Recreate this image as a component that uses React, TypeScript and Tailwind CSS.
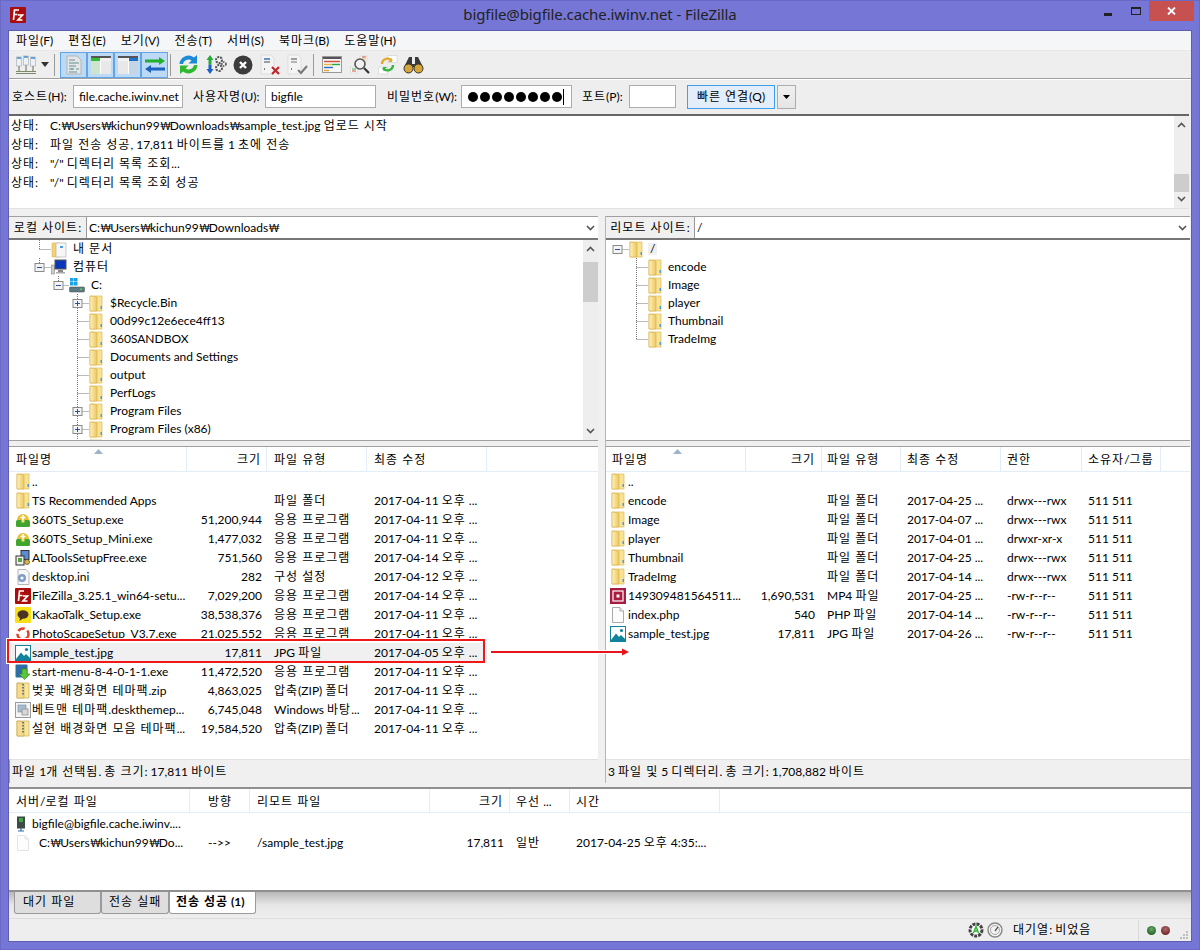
import React from 'react';

// Hangul runs get extra tracking so their advance matches the original UI font, the won sign is narrowed for the same reason
const ko = (s: string): React.ReactNode => (
  <span>
    {s.split(/([\uAC00-\uD7A3]+(?: [\uAC00-\uD7A3]+)*|₩)/).map((part, i) => {
      if (i % 2 === 0) return part;
      if (part === '₩') return <span key={i} className="text-[11px] tracking-[-1.5px]">{part}</span>;
      return <span key={i} className="tracking-[1px]">{part}</span>;
    })}
  </span>
);

const Folder = () => (
  <svg width="14" height="17" viewBox="0 0 14 17" className="shrink-0">
    <defs>
      <linearGradient id="flap" x1="0" y1="0" x2="1" y2="0">
        <stop offset="0" stopColor="#fdf2c0" />
        <stop offset="1" stopColor="#eec65a" />
      </linearGradient>
    </defs>
    <path d="M1 1 H13 V16 H1 Z" fill="#f7e296" stroke="#dcbb5c" strokeWidth="0.7" />
    <path d="M1 1 L8 2 V16 H1 Z" fill="url(#flap)" stroke="#d9b654" strokeWidth="0.7" />
    <rect x="11.5" y="11" width="1.5" height="3" fill="#4a9be0" />
  </svg>
);

const ImgIcon = () => (
  <svg width="16" height="16" viewBox="0 0 16 16" className="shrink-0">
    <rect x="0.5" y="0.5" width="15" height="15" fill="#fff" stroke="#11819c" />
    <path d="M1 14 L6 7.5 L9 11 L11 9 L15 13 V15 H1 Z" fill="#11819c" />
    <circle cx="11.5" cy="4.5" r="1.6" fill="#11819c" />
  </svg>
);

const Setup360 = () => (
  <svg width="16" height="16" viewBox="0 0 16 16" className="shrink-0">
    <path d="M2 8 A6 6 0 0 1 14 8 Z" fill="#e9c12f" />
    <rect x="1" y="8" width="14" height="7" rx="1.5" fill="#3fa52e" />
    <path d="M8 3 V8 M5.5 5.5 H10.5" stroke="#fff" strokeWidth="1.6" />
    <rect x="6.5" y="8" width="3" height="2.5" fill="#f5e07a" />
  </svg>
);

const AlTools = () => (
  <svg width="16" height="16" viewBox="0 0 16 16" className="shrink-0">
    <rect x="6" y="0.5" width="8" height="9" fill="#5b8bd0" stroke="#333" />
    <rect x="1" y="6" width="8" height="9" fill="#eee" stroke="#333" />
    <rect x="3" y="8" width="4" height="4" fill="#58a53c" />
    <circle cx="12" cy="12" r="2.5" fill="#e2b93b" stroke="#333" strokeWidth="0.6" />
  </svg>
);

const IniIcon = () => (
  <svg width="16" height="16" viewBox="0 0 16 16" className="shrink-0">
    <path d="M3 0.5 H11 L14 3.5 V15.5 H3 Z" fill="#f7f7f7" stroke="#b5b5b5" />
    <circle cx="7" cy="9" r="4" fill="#7f9cc4" />
    <circle cx="7" cy="9" r="1.6" fill="#fff" />
  </svg>
);

const FzIcon = ({ size = 16 }: { size?: number }) => (
  <svg width={size} height={size} viewBox="0 0 16 16" className="shrink-0">
    <rect width="16" height="16" rx="1" fill="#a90d0d" />
    <path d="M3.5 13 L4.5 3 H9 M4 7.5 H7.5 M8 8 H12.5 L8 13 H12.5" fill="none" stroke="#fff" strokeWidth="1.7" />
  </svg>
);

const Kakao = () => (
  <svg width="16" height="16" viewBox="0 0 16 16" className="shrink-0">
    <rect width="16" height="16" rx="1" fill="#f7e017" />
    <ellipse cx="8" cy="7.5" rx="5.5" ry="4.2" fill="#4b3322" />
    <path d="M5 10.5 L4.5 14 L8 11.5 Z" fill="#4b3322" />
  </svg>
);

const PhotoScape = () => (
  <svg width="16" height="16" viewBox="0 0 16 16" className="shrink-0">
    <circle cx="8" cy="8" r="5.5" fill="none" stroke="#d9472b" strokeWidth="2.5" strokeDasharray="7 3" />
  </svg>
);

const StartMenu = () => (
  <svg width="16" height="16" viewBox="0 0 16 16" className="shrink-0">
    <rect x="0.5" y="0.5" width="12" height="13" rx="1" fill="#2f6ea5" />
    <path d="M7 5 H12 V10 H15 L9.5 15.5 L4 10 H7 Z" fill="#5cc63a" stroke="#2e8a1a" strokeWidth="0.6" />
  </svg>
);

const ZipIcon = () => (
  <svg width="14" height="17" viewBox="0 0 14 17" className="shrink-0">
    <path d="M1 1 H13 V16 H1 Z" fill="#f8e6a0" stroke="#c9a94f" strokeWidth="0.7" />
    <path d="M1 1 L8 2 V16 H1 Z" fill="#f5dc8c" stroke="#c9a94f" strokeWidth="0.7" />
    <path d="M7 2 V13" stroke="#777" strokeWidth="2" strokeDasharray="1.5 1.5" />
  </svg>
);

const ThemeIcon = () => (
  <svg width="16" height="16" viewBox="0 0 16 16" className="shrink-0">
    <rect x="0.5" y="0.5" width="15" height="15" fill="#f4f4f4" stroke="#9a9a9a" />
    <rect x="3" y="3" width="8" height="7" fill="#a9bdd2" stroke="#7b8a99" strokeWidth="0.6" />
    <rect x="7" y="7" width="6" height="6" fill="#d7d7d7" stroke="#777" strokeWidth="0.6" />
  </svg>
);

const Mp4Icon = () => (
  <svg width="16" height="16" viewBox="0 0 16 16" className="shrink-0">
    <rect width="16" height="16" fill="#a81c3f" />
    <rect x="3" y="3" width="10" height="10" fill="none" stroke="#fff" strokeWidth="1.2" />
    <rect x="6.5" y="6.5" width="3" height="3" fill="#fff" />
  </svg>
);

const PageIcon = ({ stroke = '#aaa' }: { stroke?: string }) => (
  <svg width="14" height="16" viewBox="0 0 14 16" className="shrink-0">
    <path d="M1.5 0.5 H9 L12.5 4 V15.5 H1.5 Z" fill="#fdfdfd" stroke={stroke} />
    <path d="M9 0.5 V4 H12.5" fill="#eee" stroke={stroke} />
  </svg>
);

const fileIcons: Record<string, React.ReactNode> = {
  folder: <Folder />,
  img: <ImgIcon />,
  setup: <Setup360 />,
  al: <AlTools />,
  ini: <IniIcon />,
  fz: <FzIcon />,
  kakao: <Kakao />,
  ps: <PhotoScape />,
  start: <StartMenu />,
  zip: <ZipIcon />,
  theme: <ThemeIcon />,
  mp4: <Mp4Icon />,
  page: <PageIcon />,
};

const localFiles = [
  ['folder', '..', '', '', ''],
  ['folder', 'TS Recommended Apps', '', '파일 폴더', '2017-04-11 오후 ...'],
  ['setup', '360TS_Setup.exe', '51,200,944', '응용 프로그램', '2017-04-11 오후 ...'],
  ['setup', '360TS_Setup_Mini.exe', '1,477,032', '응용 프로그램', '2017-04-11 오후 ...'],
  ['al', 'ALToolsSetupFree.exe', '751,560', '응용 프로그램', '2017-04-14 오후 ...'],
  ['ini', 'desktop.ini', '282', '구성 설정', '2017-04-12 오후 ...'],
  ['fz', 'FileZilla_3.25.1_win64-setu...', '7,029,200', '응용 프로그램', '2017-04-14 오후 ...'],
  ['kakao', 'KakaoTalk_Setup.exe', '38,538,376', '응용 프로그램', '2017-04-11 오후 ...'],
  ['ps', 'PhotoScapeSetup_V3.7.exe', '21,025,552', '응용 프로그램', '2017-04-11 오후 ...'],
  ['img', 'sample_test.jpg', '17,811', 'JPG 파일', '2017-04-05 오후 ...'],
  ['start', 'start-menu-8-4-0-1-1.exe', '11,472,520', '응용 프로그램', '2017-04-11 오후 ...'],
  ['zip', '벚꽃 배경화면 테마팩.zip', '4,863,025', '압축(ZIP) 폴더', '2017-04-11 오후 ...'],
  ['theme', '베트맨 테마팩.deskthemep...', '6,745,048', 'Windows 바탕...', '2017-04-11 오후 ...'],
  ['zip', '설현 배경화면 모음 테마팩...', '19,584,520', '압축(ZIP) 폴더', '2017-04-11 오후 ...'],
];

const remoteFiles = [
  ['folder', '..', '', '', '', '', ''],
  ['folder', 'encode', '', '파일 폴더', '2017-04-25 ...', 'drwx---rwx', '511 511'],
  ['folder', 'Image', '', '파일 폴더', '2017-04-07 ...', 'drwx---rwx', '511 511'],
  ['folder', 'player', '', '파일 폴더', '2017-04-01 ...', 'drwxr-xr-x', '511 511'],
  ['folder', 'Thumbnail', '', '파일 폴더', '2017-04-25 ...', 'drwx---rwx', '511 511'],
  ['folder', 'TradeImg', '', '파일 폴더', '2017-04-14 ...', 'drwx---rwx', '511 511'],
  ['mp4', '149309481564511...', '1,690,531', 'MP4 파일', '2017-04-25 ...', '-rw-r--r--', '511 511'],
  ['page', 'index.php', '540', 'PHP 파일', '2017-04-14 ...', '-rw-r--r--', '511 511'],
  ['img', 'sample_test.jpg', '17,811', 'JPG 파일', '2017-04-26 ...', '-rw-r--r--', '511 511'],
];

const Chevron = ({ down = true, className = '' }: { down?: boolean; className?: string }) => (
  <svg width="9" height="6" viewBox="0 0 9 6" className={className}>
    <path d={down ? 'M1 1 L4.5 4.5 L8 1' : 'M1 5 L4.5 1.5 L8 5'} fill="none" stroke="#555" strokeWidth="1.6" />
  </svg>
);

const Scrollbar = ({ thumbClass }: { thumbClass: string }) => (
  <div className="w-[15px] shrink-0 bg-[#eeeeee] flex flex-col items-center justify-between py-[6px] relative">
    <Chevron down={false} />
    <div className={`absolute left-0 w-[15px] bg-[#cdcdcd] ${thumbClass}`} />
    <Chevron />
  </div>
);

// lead = connector area in front of a tree icon
const TreeLead = ({ width, vx, top, bottom, hTo, box, boxX, plus }: { width: number; vx?: number; top?: number; bottom?: number; hTo?: number; box?: boolean; boxX?: number; plus?: boolean }) => {
  const bx = boxX ?? vx ?? 0;
  return (
    <svg width={width} height="18" className="shrink-0">
      {vx !== undefined && <line x1={vx + 0.5} y1={top ?? 0} x2={vx + 0.5} y2={bottom ?? 18} stroke="#777" strokeDasharray="1 1" />}
      {hTo !== undefined && <line x1={bx + 0.5} y1="9.5" x2={hTo} y2="9.5" stroke="#777" strokeDasharray="1 1" />}
      {box && (
        <g>
          <rect x={bx - 4} y="5.5" width="9" height="8" fill="#f4f4f4" stroke="#8a8a8a" />
          <line x1={bx - 2} y1="9.5" x2={bx + 3} y2="9.5" stroke="#2d4f9c" />
          {plus && <line x1={bx + 0.5} y1="7" x2={bx + 0.5} y2="12" stroke="#2d4f9c" />}
        </g>
      )}
    </svg>
  );
};

const LocalTree = () => {
  const folders: [string, boolean][] = [
    ['$Recycle.Bin', true],
    ['00d99c12e6ece4ff13', false],
    ['360SANDBOX', false],
    ['Documents and Settings', false],
    ['output', false],
    ['PerfLogs', false],
    ['Program Files', true],
    ['Program Files (x86)', true],
  ];
  return (
    <div className="flex-1 min-w-0 overflow-hidden">
      <div className="flex items-center h-[18px]">
        <TreeLead width={42} vx={30} bottom={9} hTo={42} />
        <svg width="16" height="17" viewBox="0 0 16 17" className="shrink-0">
          <path d="M1 2 H9 V16 H1 Z" fill="#f2d272" stroke="#dcb95c" strokeWidth="0.6" />
          <rect x="5" y="2" width="10" height="14" fill="#f6f6f6" stroke="#aaa" strokeWidth="0.6" />
          <rect x="9" y="5" width="3" height="2" fill="#4a9be0" />
        </svg>
        <span className="ml-[6px]">{ko('내 문서')}</span>
      </div>
      <div className="flex items-center h-[18px]">
        <TreeLead width={42} vx={30} bottom={9} hTo={42} box />
        <svg width="16" height="16" viewBox="0 0 16 16" className="shrink-0">
          <rect x="0.5" y="6" width="3" height="9" fill="#ccc" stroke="#777" strokeWidth="0.5" />
          <rect x="4" y="1" width="11" height="9" fill="#0a36b8" stroke="#555" />
          <rect x="7" y="11" width="5" height="2" fill="#888" />
          <rect x="5" y="13" width="9" height="1.5" fill="#aaa" />
        </svg>
        <span className="ml-[6px]">{ko('컴퓨터')}</span>
      </div>
      <div className="flex items-center h-[18px]">
        <TreeLead width={60} vx={49} bottom={9} hTo={60} box />
        <svg width="16" height="16" viewBox="0 0 16 16" className="shrink-0">
          <rect x="1" y="1" width="3.5" height="3.5" fill="#14a3e8" />
          <rect x="5" y="1" width="3.5" height="3.5" fill="#14a3e8" />
          <rect x="1" y="5" width="3.5" height="3.5" fill="#14a3e8" />
          <rect x="5" y="5" width="3.5" height="3.5" fill="#14a3e8" />
          <rect x="0.5" y="10" width="15" height="5" rx="1" fill="#5c7a83" stroke="#444" strokeWidth="0.5" />
          <rect x="11" y="11.5" width="2" height="1.5" fill="#5ccf4e" />
        </svg>
        <span className="ml-[6px]">C:</span>
      </div>
      {folders.map(([name, plus]) => (
        <div key={name} className="flex items-center h-[18px]">
          <TreeLead width={80} vx={68} hTo={80} box={plus} plus={plus} />
          <Folder />
          <span className="ml-[7px]">{name}</span>
        </div>
      ))}
      <div className="flex items-center h-[18px]">
        <TreeLead width={80} vx={68} hTo={80} />
        <Folder />
      </div>
    </div>
  );
};

const RemoteTree = () => (
  <div className="flex-1 min-w-0 overflow-hidden">
    <div className="flex items-center h-[18px]">
      <TreeLead width={23} boxX={11} hTo={23} box />
      <Folder />
      <span className="ml-[5px] px-[2px] bg-[#f0f0f0]">/</span>
    </div>
    {['encode', 'Image', 'player', 'Thumbnail', 'TradeImg'].map((name, i) => (
      <div key={name} className="flex items-center h-[18px]">
        <TreeLead width={42} vx={30} bottom={i === 4 ? 9 : 18} hTo={42} />
        <Folder />
        <span className="ml-[6px]">{name}</span>
      </div>
    ))}
  </div>
);

const SiteBar = ({ label, path, labelClass }: { label: string; path: string; labelClass: string }) => (
  <div className="h-[24px] flex items-stretch border-t border-[#a0a0a0] border-b-2 border-b-[#777] bg-white shrink-0">
    <div className={`bg-[#f0f0f0] flex items-center justify-center pt-[1px] border-r border-[#999] ${labelClass}`}>{ko(label)}</div>
    <div className="flex-1 flex items-center pl-[2px] pr-[3px] justify-between pt-[1px]">
      {ko(path)}
      <Chevron />
    </div>
  </div>
);

const HeaderCell = ({ className = '', children }: { className?: string; children?: React.ReactNode }) => (
  <div className={`h-full flex items-center pt-[2px] border-r border-[#e3edf8] ${className}`}>{children}</div>
);

const LocalList = () => (
  <div className="flex-1 flex flex-col min-h-0 border-t border-[#a0a0a0] bg-white relative">
    <div className="h-[25px] flex shrink-0 border-b border-[#e3edf8]">
      <HeaderCell className="w-[178px] pl-[7px] relative">
        {ko('파일명')}
        <svg width="9" height="5" className="absolute left-[85px] top-[2px]"><path d="M0 5 L4.5 0 L9 5 Z" fill="#9cb4c8" /></svg>
      </HeaderCell>
      <HeaderCell className="w-[80px] justify-end pr-[5px]">{ko('크기')}</HeaderCell>
      <HeaderCell className="w-[100px] pl-[7px]">{ko('파일 유형')}</HeaderCell>
      <HeaderCell className="w-[120px] pl-[7px]">{ko('최종 수정')}</HeaderCell>
    </div>
    <div className="flex-1 min-h-0 overflow-hidden">
      {localFiles.map(([icon, name, size, type, date]) => (
        <div key={name} className={`h-[19px] flex items-center w-[478px] ${name === 'sample_test.jpg' ? 'bg-[#f0f0f0]' : ''}`}>
          <div className="w-[178px] flex items-center pl-[6px] gap-[1px] shrink-0 overflow-hidden">
            <div className="w-[16px] flex justify-center shrink-0">{fileIcons[icon]}</div>
            <span className="whitespace-nowrap">{ko(name)}</span>
          </div>
          <div className="w-[75px] text-right shrink-0">{size}</div>
          <div className="w-[112px] pl-[12px] shrink-0 whitespace-nowrap">{ko(type)}</div>
          <div className="whitespace-nowrap">{ko(date)}</div>
        </div>
      ))}
    </div>
    <div className="h-[24px] shrink-0 flex items-center pl-[2px] bg-[#f0f0f0] border-l border-[#a0a0a0] border-t border-t-[#e2e2e2]">{ko('파일 1개 선택됨. 총 크기: 17,811 바이트')}</div>
  </div>
);

const RemoteList = () => (
  <div className="flex-1 flex flex-col min-h-0 border-t border-[#a0a0a0] bg-white">
    <div className="h-[25px] flex shrink-0 border-b border-[#e3edf8]">
      <HeaderCell className="w-[140px] pl-[6px] relative">
        {ko('파일명')}
        <svg width="9" height="5" className="absolute left-[67px] top-[2px]"><path d="M0 5 L4.5 0 L9 5 Z" fill="#9cb4c8" /></svg>
      </HeaderCell>
      <HeaderCell className="w-[76px] justify-end pr-[6px]">{ko('크기')}</HeaderCell>
      <HeaderCell className="w-[79px] pl-[5px]">{ko('파일 유형')}</HeaderCell>
      <HeaderCell className="w-[100px] pl-[6px]">{ko('최종 수정')}</HeaderCell>
      <HeaderCell className="w-[81px] pl-[6px]">{ko('권한')}</HeaderCell>
      <HeaderCell className="w-[79px] pl-[6px]">{ko('소유자/그룹')}</HeaderCell>
    </div>
    <div className="flex-1 min-h-0 overflow-hidden">
      {remoteFiles.map(([icon, name, size, type, date, perm, owner]) => (
        <div key={name} className="h-[19px] flex items-center">
          <div className="w-[139px] flex items-center pl-[4px] gap-[2px] shrink-0 overflow-hidden">
            <div className="w-[16px] flex justify-center shrink-0">{fileIcons[icon]}</div>
            <span className="whitespace-nowrap">{name}</span>
          </div>
          <div className="w-[70px] text-right shrink-0">{size}</div>
          <div className="w-[85px] pl-[12px] shrink-0 whitespace-nowrap">{ko(type)}</div>
          <div className="w-[100px] pl-[7px] shrink-0 whitespace-nowrap">{date}</div>
          <div className="w-[81px] pl-[7px] shrink-0 whitespace-nowrap">{perm}</div>
          <div className="pl-[7px] whitespace-nowrap">{owner}</div>
        </div>
      ))}
    </div>
    <div className="h-[24px] shrink-0 flex items-center pl-[2px] bg-[#f0f0f0] border-t border-t-[#e2e2e2]">{ko('3 파일 및 5 디렉터리. 총 크기: 1,708,882 바이트')}</div>
  </div>
);

const ToolBtn = ({ children, className = '' }: { children: React.ReactNode; className?: string }) => (
  <div className={`h-[26px] flex items-center justify-center shrink-0 ${className}`}>{children}</div>
);

const Sep = () => <div className="w-px h-[22px] bg-[#9a9a9a] shrink-0" />;

const Toggle = ({ children }: { children: React.ReactNode }) => (
  <div className="w-[27px] h-[26px] flex items-center justify-center bg-[#bcd9f5] border border-[#62a5e6] shrink-0">{children}</div>
);

const Toolbar = () => (
  <div className="h-[28px] flex items-center pl-[5px] bg-[#eeeeee] border-t border-[#e8e8e8] shrink-0">
    <ToolBtn className="w-[24px]">
      <svg width="22" height="20" viewBox="0 0 22 20">
        <g fill="#eef1f4" stroke="#a8b2bc" strokeWidth="0.7">
          <rect x="1.5" y="2" width="5" height="9" />
          <rect x="8.5" y="1" width="5" height="9" />
          <rect x="15.5" y="2" width="5" height="9" />
        </g>
        <path d="M2 3 H6 M9 2 H13 M16 3 H20" stroke="#3b8fd4" strokeWidth="1.4" />
        <path d="M4 11 V16 M11 10 V16 M18 11 V16" stroke="#6b6b5a" strokeWidth="1" />
        <path d="M1 16.5 H21 M1 18.5 H21" stroke="#7d8a68" strokeWidth="1" />
      </svg>
    </ToolBtn>
    <ToolBtn className="w-[12px] ml-[1px]">
      <svg width="8" height="5"><path d="M0 0 H8 L4 5 Z" fill="#333" /></svg>
    </ToolBtn>
    <div className="w-[3px]" />
    <Sep />
    <div className="w-[5px]" />
    <Toggle>
      <svg width="16" height="20" viewBox="0 0 16 20">
        <path d="M1 1 H11 L15 5 V19 H1 Z" fill="#e4e7e4" stroke="#b0b6b6" />
        <path d="M3 5 H9 M3 8 H7 M9 8 H13 M3 11 H10 M3 14 H8 M10 14 H13 M3 17 H11" stroke="#6d8ca8" strokeWidth="1.2" />
        <path d="M7 8 H9 M5 14 H7" stroke="#4aa84a" strokeWidth="1.2" />
      </svg>
    </Toggle>
    <Toggle>
      <svg width="20" height="18" viewBox="0 0 20 18">
        <rect width="20" height="18" fill="#e8e8e8" />
        <rect width="20" height="2" fill="#555" />
        <rect y="2" width="9" height="3" fill="#2fc02f" />
        <rect x="9" y="2" width="11" height="3" fill="#f2f2f2" />
        <rect y="5" width="9" height="13" fill="#cde4cd" />
        <rect x="9" y="2" width="1" height="16" fill="#fff" />
      </svg>
    </Toggle>
    <Toggle>
      <svg width="20" height="18" viewBox="0 0 20 18">
        <rect width="20" height="18" fill="#e8e8e8" />
        <rect width="20" height="2" fill="#555" />
        <rect x="11" y="2" width="9" height="3" fill="#1b72c8" />
        <rect x="0" y="2" width="11" height="3" fill="#f2f2f2" />
        <rect x="11" y="5" width="9" height="13" fill="#c4d6e6" />
        <rect x="10" y="2" width="1" height="16" fill="#fff" />
      </svg>
    </Toggle>
    <Toggle>
      <svg width="20" height="18" viewBox="0 0 20 18">
        <path d="M0 3.5 H14 V1 L20 5 L14 9 V6.5 H0 Z" fill="#21b02c" />
        <path d="M20 11.5 H6 V9 L0 13 L6 17 V14.5 H20 Z" fill="#1b62c0" />
      </svg>
    </Toggle>
    <div className="w-[2px]" />
    <Sep />
    <ToolBtn className="w-[23px] ml-[6px]">
      <svg width="21" height="21" viewBox="0 0 21 21">
        <path d="M1.5 10 A9 9 0 0 1 16 3.5 L19 1 V9.5 H10.5 L13.5 6.5 A5.5 5.5 0 0 0 5 10 Z" fill="#1b8ad8" />
        <path d="M19.5 11 A9 9 0 0 1 5 17.5 L2 20 V11.5 H10.5 L7.5 14.5 A5.5 5.5 0 0 0 16 11 Z" fill="#2eb82e" />
      </svg>
    </ToolBtn>
    <ToolBtn className="w-[22px] ml-[5px]">
      <svg width="21" height="21" viewBox="0 0 21 21">
        <path d="M4 1 L7.5 6 H5.5 V10.5 H2.5 V6 H0.5 Z" fill="#25a93a" />
        <path d="M4 20 L7.5 15 H5.5 V10.5 H2.5 V15 H0.5 Z" fill="#1b62c0" />
        <circle cx="13" cy="6" r="3" fill="none" stroke="#555" strokeWidth="2" strokeDasharray="2 1" />
        <circle cx="13" cy="14" r="3" fill="none" stroke="#555" strokeWidth="2" strokeDasharray="2 1" />
        <circle cx="18" cy="10" r="2" fill="none" stroke="#555" strokeWidth="1.6" strokeDasharray="1.5 1" />
      </svg>
    </ToolBtn>
    <ToolBtn className="w-[20px] ml-[6px]">
      <svg width="20" height="20" viewBox="0 0 20 20">
        <circle cx="10" cy="10" r="9.5" fill="#3c3c3c" />
        <path d="M7 7 L13 13 M13 7 L7 13" stroke="#fff" strokeWidth="2.4" />
      </svg>
    </ToolBtn>
    <ToolBtn className="w-[21px] ml-[7px]">
      <svg width="21" height="21" viewBox="0 0 21 21">
        <path d="M1 1 H11 L14 4 V20 H1 Z" fill="#f4f4f4" stroke="#ddd" />
        <path d="M4 5 H10" stroke="#2a6cc0" strokeWidth="1.4" />
        <path d="M4 8 H10" stroke="#777" strokeWidth="1.4" />
        <path d="M4 15 H5" stroke="#555" strokeWidth="1.4" />
        <path d="M12 13 L19 20 M19 13 L12 20" stroke="#c0272d" strokeWidth="2.2" />
      </svg>
    </ToolBtn>
    <ToolBtn className="w-[21px] ml-[6px]">
      <svg width="21" height="21" viewBox="0 0 21 21">
        <path d="M1 1 H11 L14 4 V20 H1 Z" fill="#f4f4f4" stroke="#ddd" />
        <path d="M4 5 H10" stroke="#777" strokeWidth="1.4" />
        <path d="M4 8 H10" stroke="#999" strokeWidth="1.4" />
        <path d="M4 15 H5" stroke="#555" strokeWidth="1.4" />
        <path d="M11 16 L14 19 L20 12" fill="none" stroke="#777" strokeWidth="2" />
      </svg>
    </ToolBtn>
    <div className="w-[5px]" />
    <Sep />
    <ToolBtn className="w-[20px] ml-[8px]">
      <svg width="20" height="17" viewBox="0 0 20 17">
        <rect x="0.5" y="0.5" width="19" height="16" fill="#f6f6f6" stroke="#999" />
        <rect x="1" y="1" width="18" height="2" fill="#555" />
        <path d="M2 5.5 H18" stroke="#d94a3a" strokeWidth="1.4" />
        <path d="M2 8.5 H10" stroke="#e2b93b" strokeWidth="1.4" />
        <path d="M10 8.5 H18" stroke="#2aa84a" strokeWidth="1.4" />
        <path d="M2 11.5 H11" stroke="#2a6cc0" strokeWidth="1.4" />
        <path d="M2 14.5 H7" stroke="#e2a63b" strokeWidth="1.4" />
      </svg>
    </ToolBtn>
    <ToolBtn className="w-[20px] ml-[8px]">
      <svg width="20" height="20" viewBox="0 0 20 20">
        <rect x="10" y="1" width="7" height="5" fill="#fff" stroke="#ddd" />
        <path d="M12 2 H16" stroke="#d94a3a" />
        <path d="M12 4 H16" stroke="#e2b93b" />
        <rect x="0.5" y="12" width="7" height="6" fill="#fff" stroke="#ddd" />
        <path d="M2 14 H6" stroke="#2aa84a" />
        <path d="M2 16 H6" stroke="#d94a3a" />
        <circle cx="10" cy="9" r="5" fill="#f2f2f2" fillOpacity="0.7" stroke="#555" strokeWidth="1.6" />
        <path d="M14 13 L19 18" stroke="#333" strokeWidth="2.2" />
      </svg>
    </ToolBtn>
    <ToolBtn className="w-[20px] ml-[8px]">
      <svg width="20" height="20" viewBox="0 0 20 20">
        <rect x="10" y="0.5" width="9" height="7" fill="#fff" stroke="#ddd" />
        <rect x="0.5" y="12" width="9" height="7" fill="#fff" stroke="#ddd" />
        <path d="M4 9 A5.5 5.5 0 0 1 14 6" fill="none" stroke="#e2a92e" strokeWidth="2.4" />
        <path d="M15 10 A5.5 5.5 0 0 1 5 13" fill="none" stroke="#35b53f" strokeWidth="2.4" />
        <path d="M14 3 V7 H10 Z" fill="#e2a92e" />
        <path d="M5 16 V12 H9 Z" fill="#35b53f" />
      </svg>
    </ToolBtn>
    <ToolBtn className="w-[22px] ml-[4px]">
      <svg width="21" height="18" viewBox="0 0 21 18">
        <path d="M6 1 H9 V8 H12 V1 H15 L20 11 H1 Z" fill="#3a3a3a" />
        <circle cx="5.5" cy="12.5" r="4.5" fill="#d5a53a" stroke="#333" />
        <circle cx="15.5" cy="12.5" r="4.5" fill="#d5a53a" stroke="#333" />
      </svg>
    </ToolBtn>
  </div>
);

const Field = ({ className, children }: { className: string; children?: React.ReactNode }) => (
  <div className={`h-[23px] bg-white border border-[#acacac] flex items-center overflow-hidden whitespace-nowrap shrink-0 ${className}`}>{children}</div>
);

const QuickBar = () => (
  <div className="h-[36px] flex items-center pl-[3px] bg-[#eeeeee] border-t border-[#a0a0a0] shadow-[inset_0_1px_0_#fff] shrink-0">
    <span className="w-[61px] shrink-0 whitespace-nowrap">{ko('호스트(H):')}</span>
    <Field className="w-[110px] pl-[5px]">file.cache.iwinv.net</Field>
    <span className="ml-[10px] w-[72px] shrink-0 whitespace-nowrap">{ko('사용자명(U):')}</span>
    <Field className="w-[111px] pl-[5px]">bigfile</Field>
    <span className="ml-[11px] w-[74px] shrink-0 whitespace-nowrap">{ko('비밀번호(W):')}</span>
    <Field className="w-[111px] pl-[6px]">
      <span className="flex gap-[2px]">
        {Array.from({ length: 8 }).map((_, i) => (
          <span key={i} className="w-[10px] h-[10px] rounded-full bg-black" />
        ))}
      </span>
      <span className="w-px h-[16px] bg-black ml-[1px]" />
    </Field>
    <span className="ml-[10px] w-[47px] shrink-0 whitespace-nowrap">{ko('포트(P):')}</span>
    <Field className="w-[47px]" />
    <div className="ml-[11px] w-[88px] h-[24px] flex items-center justify-center bg-[#e3eefa] border border-[#3c9ff0] shrink-0">{ko('빠른 연결(Q)')}</div>
    <div className="ml-[2px] w-[19px] h-[24px] flex items-center justify-center bg-gradient-to-b from-[#f0f0f0] to-[#e5e5e5] border border-[#acacac] shrink-0">
      <svg width="7" height="4"><path d="M0 0 H7 L3.5 4 Z" fill="#000" /></svg>
    </div>
  </div>
);

const logLines = [
  'C:₩Users₩kichun99₩Downloads₩sample_test.jpg 업로드 시작',
  '파일 전송 성공, 17,811 바이트를 1 초에 전송',
  '"/" 디렉터리 목록 조회...',
  '"/" 디렉터리 목록 조회 성공',
];

const MessageLog = () => (
  <div className="h-[95px] flex mr-[2px] bg-white border-t-2 border-[#666] border-b border-b-[#e2e2e2] shrink-0">
    <div className="flex-1 pl-[2px]">
      {logLines.map(line => (
        <div key={line} className="h-[19px] flex items-center">
          <span className="w-[39px] shrink-0">{ko('상태:')}</span>
          {ko(line)}
        </div>
      ))}
    </div>
    <Scrollbar thumbClass="top-[58px] h-[18px]" />
  </div>
);

const Queue = () => (
  <div className="h-[105px] bg-white border-t-2 border-[#909090] border-b-2 border-b-[#909090] shrink-0">
    <div className="h-[24px] flex border-b border-[#e3edf8]">
      <HeaderCell className="w-[181px] pl-[7px]">{ko('서버/로컬 파일')}</HeaderCell>
      <HeaderCell className="w-[60px] pl-[18px]">{ko('방향')}</HeaderCell>
      <HeaderCell className="w-[180px] pl-[7px]">{ko('리모트 파일')}</HeaderCell>
      <HeaderCell className="w-[80px] justify-end pr-[6px]">{ko('크기')}</HeaderCell>
      <HeaderCell className="w-[60px] pl-[6px]">{ko('우선 ...')}</HeaderCell>
      <HeaderCell className="w-[150px] pl-[6px]">{ko('시간')}</HeaderCell>
    </div>
    <div className="h-[19px] flex items-center pl-[7px] gap-[6px] mt-[1px]">
      <svg width="10" height="16" viewBox="0 0 10 16" className="shrink-0">
        <rect x="1" y="0.5" width="8" height="12" fill="#3d4a45" />
        <rect x="3" y="2" width="4" height="4" fill="#3fa83f" />
        <path d="M5 12 V15 M2 15 H8" stroke="#2f6ea5" strokeWidth="1.2" />
      </svg>
      <span>bigfile@bigfile.cache.iwinv....</span>
    </div>
    <div className="h-[19px] flex items-center">
      <div className="w-[181px] flex items-center pl-[7px] overflow-hidden">
        <PageIcon stroke="#e4e4e4" />
        <span className="ml-[9px] whitespace-nowrap">{ko('C:₩Users₩kichun99₩Do...')}</span>
      </div>
      <div className="w-[60px] pl-[18px]">--&gt;&gt;</div>
      <div className="w-[180px] pl-[7px]">/sample_test.jpg</div>
      <div className="w-[74px] text-right">17,811</div>
      <div className="w-[72px] pl-[12px]">{ko('일반')}</div>
      <div>{ko('2017-04-25 오후 4:35:...')}</div>
    </div>
  </div>
);

const Tabs = () => (
  <div className="h-[27px] shrink-0 flex items-start pl-[5px] bg-gradient-to-b from-[#b9b9b9] via-[#e6e6e6] to-[#efefef] border-b border-[#dcdcdc]">
    <div className="w-[87px] h-[22px] flex items-start pl-[8px] pt-[4px] bg-[#dedede] border border-t-0 border-[#9a9a9a] rounded-b-[3px]">{ko('대기 파일')}</div>
    <div className="w-[68px] h-[22px] flex items-start pl-[7px] pt-[4px] bg-[#dedede] border border-t-0 border-[#9a9a9a] rounded-b-[3px]">{ko('전송 실패')}</div>
    <div className="w-[87px] h-[22px] flex items-start pl-[6px] pt-[4px] bg-white border border-t-0 border-[#9a9a9a] rounded-b-[3px] font-bold">{ko('전송 성공 (1)')}</div>
  </div>
);

const StatusBar = () => (
  <div className="flex-1 flex items-center justify-end bg-[#eeeeee] relative">
    <svg width="16" height="16" viewBox="0 0 16 16" className="shrink-0">
      <circle cx="8" cy="8" r="6" fill="#fff" stroke="#444" strokeWidth="3" strokeDasharray="3 1" />
      <path d="M5.5 11 L8 4.5 L10.5 11 M6.5 9 H9.5" fill="none" stroke="#2eb82e" strokeWidth="1.5" />
    </svg>
    <svg width="16" height="16" viewBox="0 0 16 16" className="shrink-0 ml-[3px]">
      <circle cx="8" cy="8" r="7" fill="#f2f2f2" stroke="#888" strokeWidth="1.4" />
      <circle cx="8" cy="8" r="4.5" fill="none" stroke="#aaa" />
      <path d="M8 9 L11 5" stroke="#555" strokeWidth="1.3" />
    </svg>
    <span className="ml-[10px] w-[125px] whitespace-nowrap">{ko('대기열: 비었음')}</span>
    <div className="w-px h-[21px] bg-[#d8d8d8]" />
    <div className="w-[9px] h-[9px] rounded-full bg-[radial-gradient(circle_at_50%_35%,#6aa86a,#0d4d0d)] ml-[8px]" />
    <div className="w-[9px] h-[9px] rounded-full bg-[radial-gradient(circle_at_50%_35%,#b06a6a,#5a0d0d)] ml-[5px]" />
    <svg width="10" height="10" viewBox="0 0 10 10" className="ml-[9px] mr-[2px] mt-[9px] shrink-0">
      <path d="M7 1 H9 V3 H7 Z M4 4 H6 V6 H4 Z M7 4 H9 V6 H7 Z M1 7 H3 V9 H1 Z M4 7 H6 V9 H4 Z M7 7 H9 V9 H7 Z" fill="#bdbdbd" />
    </svg>
  </div>
);

export default function App() {
  return (
    <div className="w-[1200px] h-[950px] relative overflow-hidden flex flex-col bg-[#7676d6] border border-[#6a6ac4] text-[12px] leading-none text-black font-['Lato','Noto_Sans','Noto_Sans_CJK_KR',sans-serif]">
      <div className="h-[29px] flex items-start shrink-0 relative">
        <div className="ml-[9px] mt-[6px]"><FzIcon /></div>
        <div className="flex-1 text-center text-[15px] mt-[6px] text-[#222] pl-[70px] font-['Noto_Sans',sans-serif] tracking-[-0.1px]">bigfile@bigfile.cache.iwinv.net - FileZilla</div>
        <div className="flex items-start pr-[5px]">
          <div className="w-[8px] h-[3px] bg-[#222] mt-[12px]" />
          <div className="w-[10px] h-[8px] border border-[#222] border-t-[2px] mt-[6px] ml-[19px]" />
          <div className="w-[45px] h-[20px] bg-[#c75050] flex items-center justify-center ml-[8px]">
            <svg width="9" height="8" viewBox="0 0 9 8"><path d="M1 0.5 L8 7.5 M8 0.5 L1 7.5" stroke="#fff" strokeWidth="1.8" /></svg>
          </div>
        </div>
      </div>

      <div className="mx-[7px] mb-[7px] flex-1 min-h-0 flex flex-col bg-[#f0f0f0] border border-[#5e5eb0]">
        <div className="h-[19px] flex items-center pl-[7px] gap-[15px] bg-[#f5f6f7] shrink-0">
          {['파일(F)', '편집(E)', '보기(V)', '전송(T)', '서버(S)', '북마크(B)', '도움말(H)'].map(m => (
            <span key={m}>{ko(m)}</span>
          ))}
        </div>
        <Toolbar />
        <QuickBar />
        <MessageLog />

        <div className="h-[578px] flex flex-col shrink-0 pt-[7px] pb-[4px]">
          <div className="flex-1 min-h-0 grid grid-cols-[589px_1fr] gap-x-[7px] pr-[1px]">
            <div className="flex flex-col min-h-0">
              <div className="h-[225px] flex flex-col shrink-0 border-b border-[#a0a0a0] bg-white">
                <SiteBar label="로컬 사이트:" path="C:₩Users₩kichun99₩Downloads₩" labelClass="w-[78px]" />
                <div className="flex-1 min-h-0 flex">
                  <LocalTree />
                  <Scrollbar thumbClass="top-[22px] h-[40px]" />
                </div>
              </div>
              <div className="h-[5px] shrink-0" />
              <LocalList />
            </div>
            <div className="flex flex-col min-h-0 border-l border-[#b5b5b5]">
              <div className="h-[225px] flex flex-col shrink-0 border-b border-[#a0a0a0] bg-white">
                <SiteBar label="리모트 사이트:" path="/" labelClass="w-[89px]" />
                <div className="flex-1 min-h-0 flex">
                  <RemoteTree />
                </div>
              </div>
              <div className="h-[5px] shrink-0" />
              <RemoteList />
            </div>
          </div>
        </div>

        <Queue />
        <Tabs />
        <StatusBar />
      </div>

      <div className="absolute left-[6px] top-[638px] w-[478px] h-[24px] border-2 border-[#f01818] shadow-[0_0_0_1px_#ffffff] pointer-events-none" />
      <svg width="140" height="10" viewBox="0 0 140 10" className="absolute left-[490px] top-[646px]">
        <path d="M0 5 H132" stroke="#fff" strokeWidth="4" />
        <path d="M0 5 H132" stroke="#e8141c" strokeWidth="2" />
        <path d="M131 1.5 L138 5 L131 8.5 Z" fill="#e8141c" />
      </svg>
    </div>
  );
}
